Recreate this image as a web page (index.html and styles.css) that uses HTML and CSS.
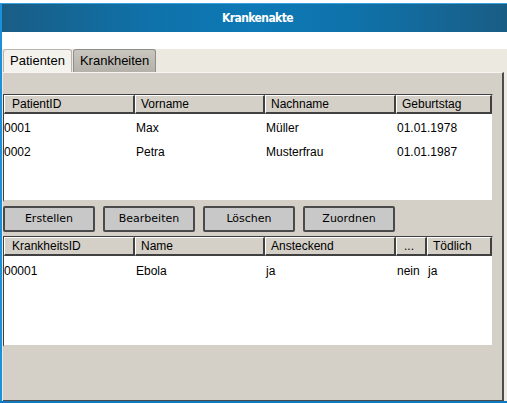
FILE: index.html
```html
<!DOCTYPE html>
<html>
<head>
<meta charset="utf-8">
<link rel="stylesheet" href="styles.css">
</head>
<body>
<div class="win">
  <div class="topgap"></div>
  <div class="titlebar">Krankenakte</div>
  <div class="whitegap"></div>
  <div class="tabs">
    <div class="tab active">Patienten</div>
    <div class="tab">Krankheiten</div>
  </div>
  <div class="panewrap">
    <div class="panel">
      <div class="grid g1">
        <table>
          <colgroup><col class="c1"><col class="c2"><col class="c3"><col class="c4"></colgroup>
          <thead><tr><th>PatientID</th><th>Vorname</th><th>Nachname</th><th>Geburtstag</th></tr></thead>
          <tbody>
            <tr><td>0001</td><td>Max</td><td>Müller</td><td>01.01.1978</td></tr>
            <tr><td>0002</td><td>Petra</td><td>Musterfrau</td><td>01.01.1987</td></tr>
          </tbody>
        </table>
      </div>
      <div class="buttons">
        <button class="btn">Erstellen</button>
        <button class="btn">Bearbeiten</button>
        <button class="btn">Löschen</button>
        <button class="btn">Zuordnen</button>
      </div>
      <div class="grid g2">
        <table>
          <colgroup><col class="c1"><col class="c2"><col class="c3"><col class="c5"><col class="c6"></colgroup>
          <thead><tr><th>KrankheitsID</th><th>Name</th><th>Ansteckend</th><th class="dots">...</th><th>Tödlich</th></tr></thead>
          <tbody>
            <tr><td>00001</td><td>Ebola</td><td>ja</td><td>nein</td><td>ja</td></tr>
          </tbody>
        </table>
      </div>
    </div>
  </div>
  <div class="bottomline"></div>
</div>
</body>
</html>
```

FILE: styles.css
```css
html, body {
  margin: 0;
  padding: 0;
  background: #ffffff;
  overflow: hidden;
}
.win {
  width: 507px;
  height: 403px;
  display: flex;
  flex-direction: column;
  font-family: "Liberation Sans", Arial, sans-serif;
  font-size: 12px;
  color: #000;
}
.topgap {
  height: 3px;
  background: #ffffff;
}
.titlebar {
  height: 28px;
  border-top: 1px solid #3aa2e2;
  border-left: 2px solid #1b8fd8;
  background: linear-gradient(to right, #195d85 0%, #0f72aa 30%, #0d79b6 50%, #0f72aa 70%, #195d85 100%);
  color: #ffffff;
  font-family: "DejaVu Sans Condensed", "DejaVu Sans", sans-serif;
  font-stretch: condensed;
  font-weight: bold;
  font-size: 12px;
  letter-spacing: -0.6px;
  display: flex;
  align-items: center;
  justify-content: center;
  padding-left: 6px;
}
.whitegap {
  height: 17px;
  border-left: 2px solid #1b8fd8;
  background: #ffffff;
}
.tabs {
  height: 23px;
  border-left: 2px solid #1b8fd8;
  background: #ece9e1;
  display: flex;
  align-items: flex-end;
  padding-left: 1px;
  gap: 1px;
}
.tab {
  height: 23px;
  box-sizing: border-box;
  border: 1px solid #8f8d88;
  border-bottom: none;
  border-radius: 3px 3px 0 0;
  background: linear-gradient(#c9c6bf, #b4b1aa);
  font-size: 13px;
  padding: 2px 6px 0 6px;
  line-height: 17px;
}
.tab.active {
  background: #f3f2ed;
  border-color: #b8b5ae;
}
.panewrap {
  flex: 1;
  border-left: 2px solid #1b8fd8;
  background: #ece9e1;
  display: flex;
  padding-left: 1px;
  padding-right: 3px;
}
.panel {
  flex: 1;
  background: #d4d0c8;
  border-top: 1px solid #f6f5f2;
  border-right: 2px solid #4c4c4c;
  border-bottom: 1px solid #4c4c4c;
  padding-top: 21px;
  display: flex;
  flex-direction: column;
  gap: 4px;
}
.bottomline {
  height: 2px;
  background: #1179c0;
}
.grid {
  width: 490px;
  box-sizing: border-box;
  background: #ffffff;
  border-top: 1px solid #404040;
  border-left: 1px solid #404040;
  border-right: 1px solid #d4d0c8;
  border-bottom: 2px solid #d4d0c8;
  overflow: hidden;
}
.g1 { height: 108px; }
.g2 { height: 111px; }
table {
  table-layout: fixed;
  border-collapse: separate;
  border-spacing: 0;
  width: 488px;
}
col.c1 { width: 131px; }
col.c2 { width: 130px; }
col.c3 { width: 131px; }
col.c4 { width: 96px; }
col.c5 { width: 31px; }
col.c6 { width: 65px; }
th {
  height: 19px;
  box-sizing: border-box;
  background: #d4d0c8;
  border-top: 1px solid #ffffff;
  border-left: 1px solid #ffffff;
  border-right: 2px solid #404040;
  border-bottom: 2px solid #404040;
  font-weight: normal;
  text-align: left;
  padding: 0 0 0 5px;
  font-size: 12px;
  line-height: 15px;
  white-space: nowrap;
  overflow: hidden;
}
th:first-child { padding-left: 7px; }
th.dots { padding-left: 7px; }
td {
  height: 21px;
  padding: 3px 0 0 1px;
  white-space: nowrap;
  overflow: hidden;
  vertical-align: middle;
}
td:first-child { padding-left: 0; }
.g2 td { height: 23px; }
.buttons {
  display: flex;
  gap: 8px;
}
.btn {
  width: 92px;
  height: 26px;
  box-sizing: border-box;
  background: #c8c8c8;
  border: 2px solid #4a4a4a;
  border-radius: 2px;
  font-family: "DejaVu Sans", sans-serif;
  font-size: 11px;
  color: #000;
  padding: 0 0 2px 0;
  margin: 0;
}
```
